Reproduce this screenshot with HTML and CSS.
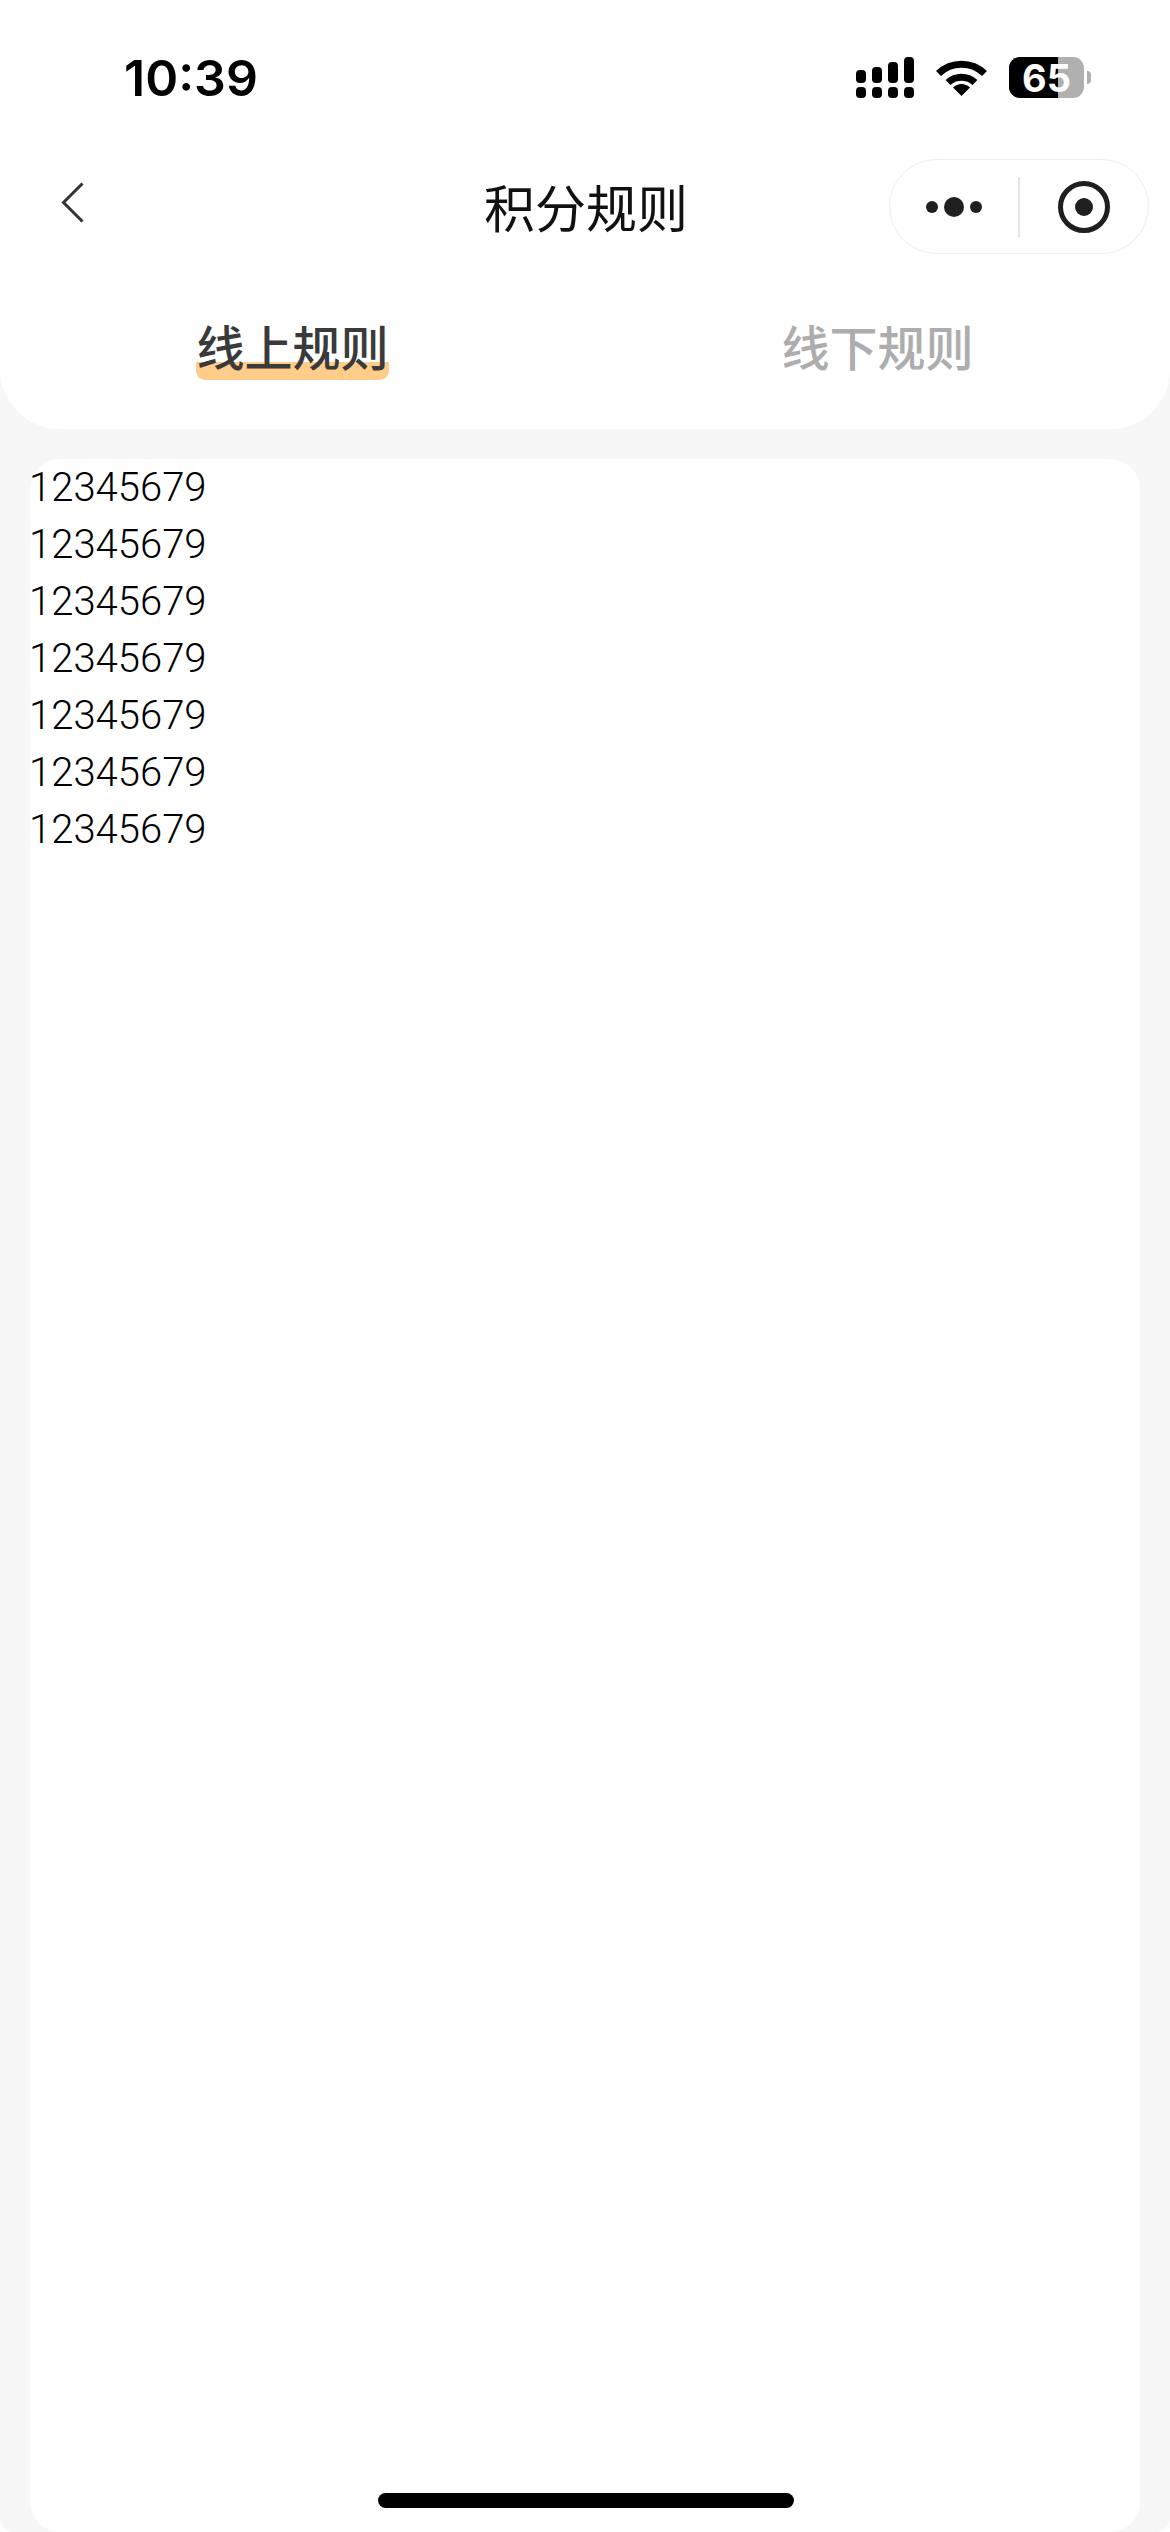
FILE: index.html
```html
<!DOCTYPE html>
<html lang="zh">
<head>
    <meta charset="UTF-8">
    <meta name="viewport" content="width=device-width, initial-scale=1.0">
    <title>积分规则</title>
    <link rel="stylesheet" href="styles.css">
</head>
<body>
    <div class="page">
        <div class="header">
            <div class="status-bar">
                <span class="time">10:39</span>
                <div class="status-icons">
                    <svg class="signal" width="58" height="41" viewBox="0 0 58 41">
                        <rect x="0" y="30" width="10" height="11" rx="4"/>
                        <rect x="16" y="30" width="10" height="11" rx="4"/>
                        <rect x="32" y="30" width="10" height="11" rx="4"/>
                        <rect x="48" y="30" width="10" height="11" rx="4"/>
                        <rect x="0" y="13" width="10" height="13" rx="4"/>
                        <rect x="16" y="10" width="10" height="16" rx="4"/>
                        <rect x="32" y="5" width="10" height="21" rx="4"/>
                        <rect x="48" y="0" width="10" height="26" rx="4"/>
                    </svg>
                    <svg class="wifi" width="51" height="37" viewBox="0 0 51 37">
                        <path d="M2.5 14.5 A33 33 0 0 1 48.5 14.5" fill="none" stroke="#000" stroke-width="7"/>
                        <path d="M12 23.5 A20 20 0 0 1 39 23.5" fill="none" stroke="#000" stroke-width="7"/>
                        <path d="M25.5 37 L17 28.5 A12 12 0 0 1 34 28.5 Z"/>
                    </svg>
                    <div class="battery">
                        <div class="battery-body">
                            <div class="battery-fill"></div>
                            <span class="battery-num">65</span>
                        </div>
                        <div class="battery-tip"></div>
                    </div>
                </div>
            </div>
            <div class="nav-bar">
                <svg class="back" width="23" height="41" viewBox="0 0 23 41">
                    <path d="M21.5 1.5 L2.5 20.5 L21.5 39.5" fill="none" stroke="#333" stroke-width="3"/>
                </svg>
                <h1 class="title">积分规则</h1>
                <div class="capsule">
                    <div class="capsule-side">
                        <svg width="56" height="20" viewBox="0 0 56 20">
                            <circle cx="6" cy="10" r="6"/>
                            <circle cx="28" cy="10" r="10"/>
                            <circle cx="50" cy="10" r="6"/>
                        </svg>
                    </div>
                    <div class="capsule-line"></div>
                    <div class="capsule-side">
                        <svg width="52" height="52" viewBox="0 0 52 52">
                            <circle cx="26" cy="26" r="23.5" fill="none" stroke="#1f1f1f" stroke-width="5"/>
                            <circle cx="26" cy="26" r="9"/>
                        </svg>
                    </div>
                </div>
            </div>
            <div class="tabs">
                <div class="tab active"><span class="tab-text">线上规则</span></div>
                <div class="tab"><span class="tab-text">线下规则</span></div>
            </div>
        </div>
        <div class="content">
            <p class="line">12345679</p>
            <p class="line">12345679</p>
            <p class="line">12345679</p>
            <p class="line">12345679</p>
            <p class="line">12345679</p>
            <p class="line">12345679</p>
            <p class="line">12345679</p>
        </div>
        <div class="home-bar"></div>
    </div>
</body>
</html>
```

FILE: styles.css
```css
html, body {
    margin: 0;
    padding: 0;
    background: #fff;
}
.page {
    position: relative;
    width: 1170px;
    height: 2532px;
    display: flex;
    flex-direction: column;
    background: #f7f7f7;
    border-radius: 0 0 14px 14px;
    overflow: hidden;
    font-family: "Noto Sans CJK SC", sans-serif;
}
.header {
    height: 429px;
    background: #fff;
    border-radius: 0 0 60px 60px;
    flex-shrink: 0;
}
.status-bar {
    height: 57px;
    padding: 49px 79px 0 124px;
    display: flex;
    justify-content: space-between;
    align-items: center;
}
.time {
    font-family: Inter, sans-serif;
    font-size: 50px;
    font-weight: 600;
    color: #000;
}
.status-icons {
    display: flex;
    align-items: center;
    gap: 22px;
}
.battery {
    display: flex;
    align-items: center;
    gap: 3px;
}
.battery-body {
    position: relative;
    width: 75px;
    height: 41px;
    border-radius: 11px;
    background: #b0b0b0;
    display: flex;
    align-items: center;
    justify-content: center;
}
.battery-fill {
    position: absolute;
    left: 0;
    top: 0;
    bottom: 0;
    width: 49px;
    background: #000;
    border-radius: 11px 0 0 11px;
}
.battery-num {
    position: relative;
    font-family: Inter, sans-serif;
    font-size: 38px;
    font-weight: 700;
    line-height: 1;
    color: #fff;
}
.battery-tip {
    width: 4px;
    height: 13px;
    background: #b0b0b0;
    border-radius: 0 4px 4px 0;
}
.nav-bar {
    position: relative;
    height: 95px;
    margin-top: 53px;
    padding: 0 21px 0 61px;
    display: flex;
    align-items: center;
    justify-content: space-between;
}
.back {
    margin-top: -9px;
}
.title {
    position: absolute;
    left: 2px;
    right: 0;
    top: 0;
    margin: 0;
    font-size: 51px;
    font-weight: 400;
    line-height: 95px;
    text-align: center;
    color: #111;
}
.capsule {
    position: relative;
    width: 260px;
    height: 95px;
    box-sizing: border-box;
    border: 1.5px solid #eee;
    border-radius: 48px;
    display: flex;
    align-items: center;
    fill: #1f1f1f;
}
.capsule-side {
    flex: 1;
    display: flex;
    justify-content: center;
}
.capsule-line {
    width: 2px;
    height: 60px;
    background: #e5e5e5;
}
.tabs {
    display: flex;
    margin-top: 56px;
}
.tab {
    flex: 1;
    text-align: center;
    color: #adadad;
    font-size: 48px;
    font-weight: 500;
    line-height: 70px;
}
.tab-text {
    display: inline-block;
}
.tab.active .tab-text {
    color: #3a3a3a;
    background: linear-gradient(#ffcc8a, #ffcc8a) no-repeat left 0 top 52px / 100% 18px;
    border-radius: 9px;
}
.content {
    flex: 1;
    margin: 30px 30px 0;
    padding-top: 0;
    background: #fff;
    border-radius: 30px;
}
.line {
    margin: 0;
    font-family: Roboto, sans-serif;
    font-size: 40px;
    font-weight: 300;
    line-height: 57px;
    text-indent: -1px;
    color: #000;
}
.home-bar {
    position: absolute;
    left: 378px;
    bottom: 24px;
    width: 416px;
    height: 15px;
    background: #000;
    border-radius: 8px;
}
```
